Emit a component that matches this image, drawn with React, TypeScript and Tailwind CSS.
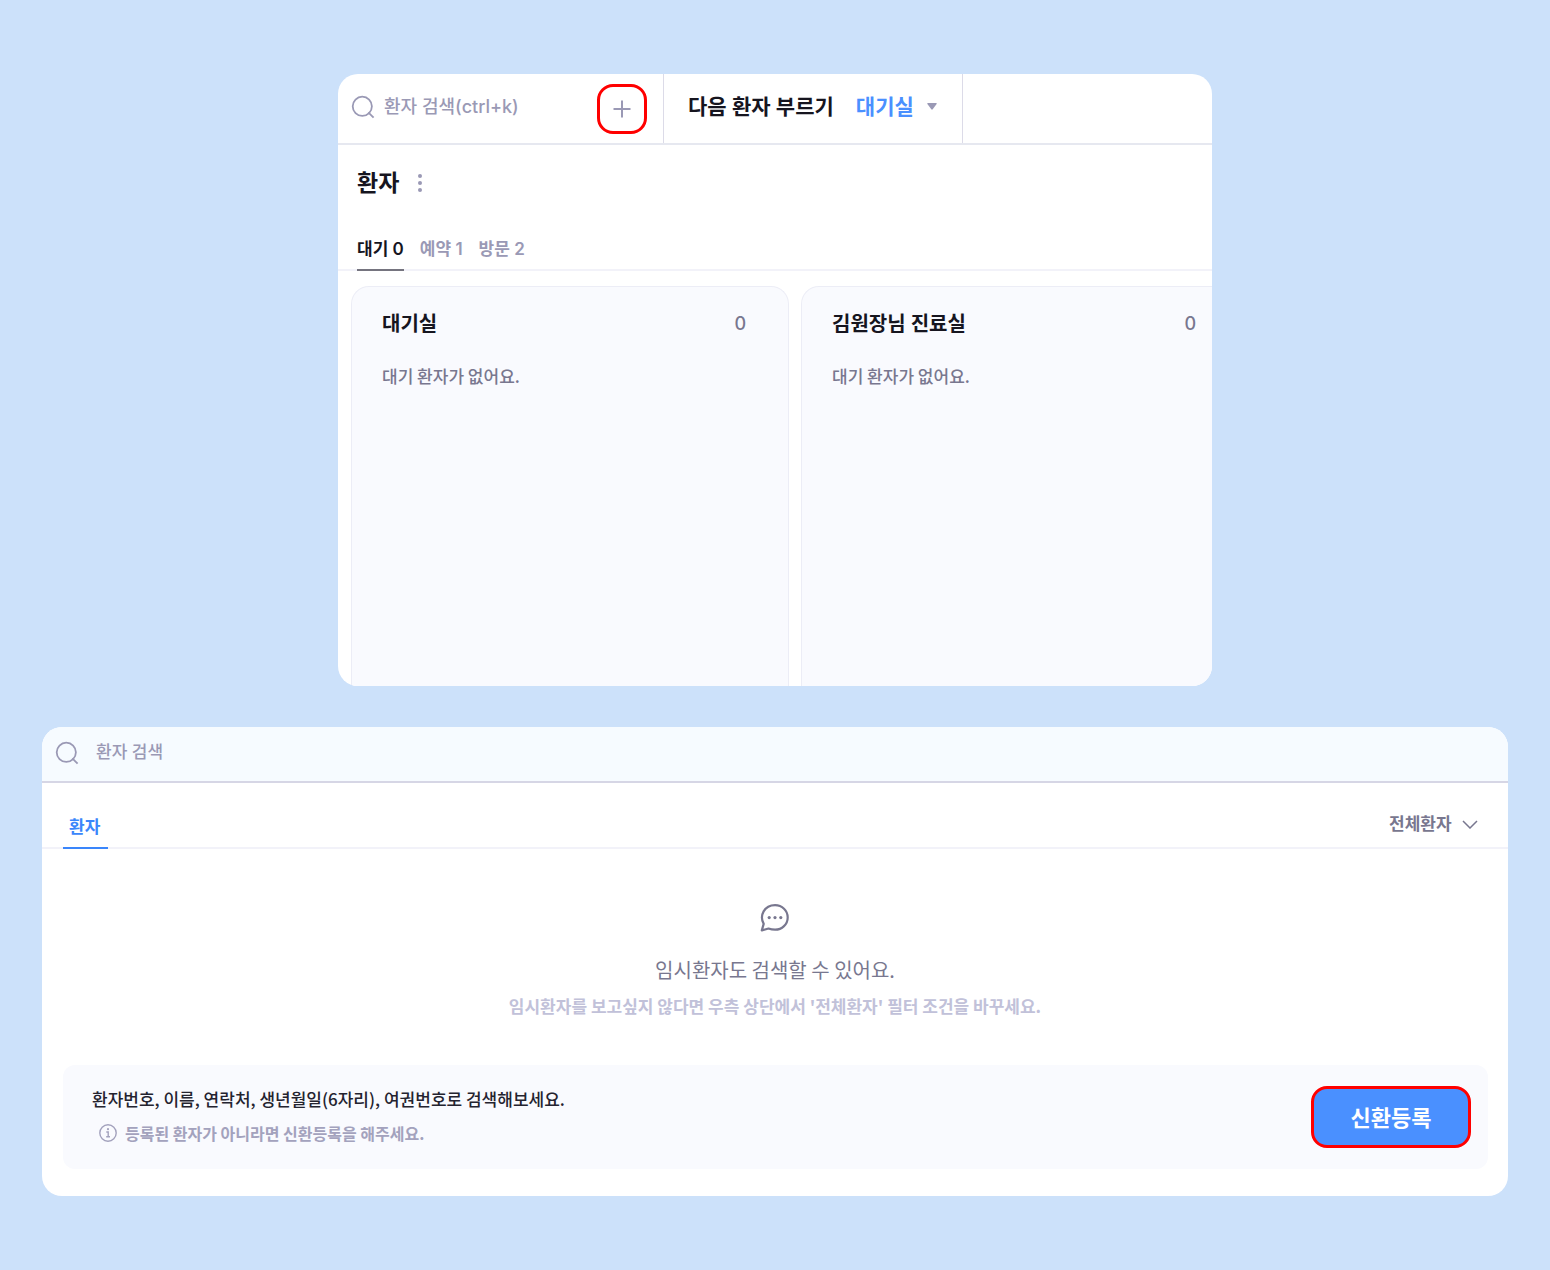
const columns = [
  { name: "대기실", count: 0 },
  { name: "김원장님 진료실", count: 0 },
];

const tabs = [
  { label: "대기", count: 0 },
  { label: "예약", count: 1 },
  { label: "방문", count: 2 },
];

const SearchIcon = () => (
  <svg viewBox="0 0 24 24" className="size-6 shrink-0 text-[#9a99b5]" fill="none" stroke="currentColor" strokeWidth="1.8">
    <circle cx="11.3" cy="11.3" r="9.6" />
    <path d="M17.3 17.3 22.6 22.6" />
  </svg>
);

const WaitingBoard = () => {
  return (
    <section className="mx-auto flex h-[612px] w-full max-w-[874px] flex-col overflow-hidden rounded-[20px] bg-white">
      <header className="flex h-[71px] shrink-0 border-b-2 border-[#e6e8f0]">
        <div className="flex w-[326px] shrink-0 items-center border-r border-[#dcdbe8] pr-4 pl-[13px]">
          <div className="flex min-w-0 flex-1 items-center pb-1">
            <SearchIcon />
            <input
              type="search"
              aria-label="환자 검색"
              placeholder="환자 검색(ctrl+k)"
              className="h-8 min-w-0 flex-1 pl-[9px] text-lg font-medium outline-none placeholder:text-[#9a99b5]"
            />
          </div>
          <button
            type="button"
            aria-label="환자 추가"
            className="flex size-[50px] items-center justify-center rounded-2xl border-3 border-[#ff0000] text-[#9a99b5]"
          >
            <svg viewBox="0 0 18 18" className="size-[18px]" stroke="currentColor" strokeWidth="2">
              <path d="M9 0.5v17M0.5 9h17" />
            </svg>
          </button>
        </div>
        <div className="flex w-[299px] shrink-0 items-center border-r border-[#dcdbe8] pb-1 pl-6 text-[21px]">
          <button type="button" className="font-semibold text-[#16151f]">
            다음 환자 부르기
          </button>
          <select aria-label="진료실 선택" className="ml-[22px] appearance-none font-semibold text-[#4a90ff] outline-none">
            <option>대기실</option>
          </select>
          <svg viewBox="0 0 10 7" className="ml-[13px] h-[7px] w-[10px] fill-[#9a99b5]">
            <path d="M1 0h8q1.3 0 .6 1L5.7 6.3q-.7.9-1.4 0L.4 1Q-.3 0 1 0z" />
          </svg>
        </div>
      </header>

      <div className="flex h-[74px] shrink-0 items-center gap-[19px] pt-[2px] pl-[19px]">
        <h1 className="text-[23px] leading-8 font-semibold text-[#16151f]">환자</h1>
        <button type="button" aria-label="더보기">
          <svg viewBox="0 0 4 18" className="h-[18px] w-1 fill-[#9a99b5]">
            <circle cx="2" cy="2" r="2" />
            <circle cx="2" cy="9" r="2" />
            <circle cx="2" cy="16" r="2" />
          </svg>
        </button>
      </div>

      <nav className="flex h-[52px] shrink-0 gap-4 border-b-2 border-[#f2f2f9] pt-[18px] pl-[19px] text-[17px] font-semibold">
        {tabs.map((tab, i) => (
          <button
            key={tab.label}
            type="button"
            className={
              i === 0
                ? "-mb-[2px] border-b-2 border-[#75747f] pb-2 text-[#16151f]"
                : "-mb-[2px] border-b-2 border-transparent pb-2 text-[#9a99b5]"
            }
          >
            {tab.label} {tab.count}
          </button>
        ))}
      </nav>

      <div className="flex min-h-0 flex-1 gap-3 pt-[15px] pl-[13px]">
        {columns.map((column) => (
          <article
            key={column.name}
            className="w-[438px] shrink-0 rounded-t-[18px] border border-b-0 border-[#ecedf6] bg-[#f9fafe] pt-[21px] pr-[42px] pl-[30px]"
          >
            <div className="flex items-center justify-between">
              <h2 className="text-xl leading-8 font-semibold text-[#16151f]">{column.name}</h2>
              <span className="text-lg font-medium text-[#78778f]">{column.count}</span>
            </div>
            <p className="mt-6 font-['Noto_Sans_CJK_KR',sans-serif] text-[17px] leading-6 font-medium text-[#78778f]">
              대기 환자가 없어요.
            </p>
          </article>
        ))}
      </div>
    </section>
  );
};

const PatientSearch = () => {
  return (
    <section className="w-full overflow-hidden rounded-[20px] bg-white">
      <label className="flex h-14 items-center border-b-2 border-[#d6d6e5] bg-[#f6fbff] pb-[3px] pl-[13px]">
        <SearchIcon />
        <input
          type="search"
          aria-label="환자 검색"
          placeholder="환자 검색"
          className="ml-[17px] flex-1 text-[17px] font-medium outline-none placeholder:text-[#9a99b5]"
        />
      </label>

      <div className="flex h-[66px] items-end justify-between border-b-2 border-[#f2f2f9] pr-[30px] pl-[21px] text-[17px]">
        <button type="button" className="-mb-[2px] h-9 border-b-2 border-[#3a86fb] pt-[2px] pr-2 pb-2 pl-[6px] font-bold text-[#3a86fb]">
          환자
        </button>
        <label className="flex items-center gap-[10px] pb-[10px] text-[#78778f]">
          <select aria-label="환자 필터" className="appearance-none font-bold outline-none">
            <option>전체환자</option>
          </select>
          <svg viewBox="0 0 16 9" className="h-[9px] w-4" fill="none" stroke="currentColor" strokeWidth="1.5">
            <path d="M1 1l7 7 7-7" />
          </svg>
        </label>
      </div>

      <div className="flex flex-col items-center pt-[54px] text-center font-['Noto_Sans_CJK_KR',sans-serif]">
        <svg viewBox="0 0 30 30" className="size-[30px] text-[#78778f]" fill="none" stroke="currentColor" strokeWidth="2.2">
          <path
            d="M1.8 27.4 3.7 20.9C-.9 12.6 4.3 2.1 15.1 2.1A12.6 12.3 0 0 1 15.1 26.7Q11.7 26.7 8.5 25.5Z"
            strokeLinejoin="round"
          />
          <g fill="currentColor" stroke="none">
            <circle cx="9.2" cy="14.6" r="1.6" />
            <circle cx="15" cy="14.6" r="1.6" />
            <circle cx="20.8" cy="14.6" r="1.6" />
          </g>
        </svg>
        <p className="mt-[21px] text-xl leading-8 text-[#78778f]">임시환자도 검색할 수 있어요.</p>
        <p className="mt-2 text-[17px] leading-6 font-semibold text-[#c1c1d9]">
          임시환자를 보고싶지 않다면 우측 상단에서 '전체환자' 필터 조건을 바꾸세요.
        </p>
      </div>

      <div className="mr-5 mb-[27px] ml-[21px] mt-[47px] flex h-[104px] items-center justify-between rounded-xl bg-[#f9fafe] pr-[17px] pl-[29px]">
        <div className="pb-[2px] font-['Noto_Sans_CJK_KR',sans-serif]">
          <p className="text-[17px] leading-6 font-medium text-[#24232f]">
            환자번호, 이름, 연락처, 생년월일(6자리), 여권번호로 검색해보세요.
          </p>
          <p className="mt-[10px] flex items-center gap-[7px] pl-[6px] text-base leading-6 font-semibold text-[#a3a2bd]">
            <svg viewBox="0 0 20 20" className="size-5" fill="none" stroke="currentColor" strokeWidth="1.4">
              <circle cx="10" cy="10" r="8.2" />
              <path d="M8.3 9h1.9v4.5M8.2 13.7h3.8" />
              <circle cx="10" cy="6.2" r="1.1" fill="currentColor" stroke="none" />
            </svg>
            등록된 환자가 아니라면 신환등록을 해주세요.
          </p>
        </div>
        <button
          type="button"
          className="h-[62px] w-40 shrink-0 rounded-2xl border-3 border-[#ff0000] bg-[#4a90ff] pt-[2px] text-[22px] font-bold text-white"
        >
          신환등록
        </button>
      </div>
    </section>
  );
};

export default function App() {
  return (
    <main className="flex min-h-screen flex-col gap-[41px] bg-[#cce1fa] px-[42px] pt-[74px] pb-[74px] font-['Inter','Noto_Sans_CJK_KR',sans-serif]">
      <WaitingBoard />
      <PatientSearch />
    </main>
  );
}
